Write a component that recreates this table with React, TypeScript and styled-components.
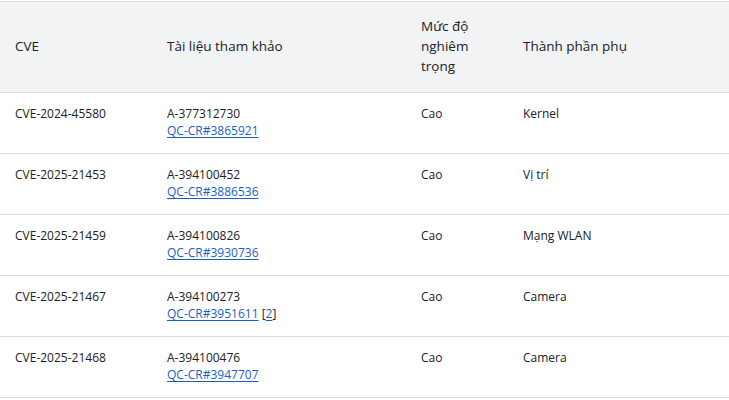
import styled, { createGlobalStyle } from 'styled-components';

const GlobalStyle = createGlobalStyle`
  html, body {
    margin: 0;
    padding: 0;
    background: #ffffff;
  }
  body {
    padding-top: 1px;
    font-family: 'Open Sans', 'Noto Sans', 'Liberation Sans', sans-serif;
    color: #202124;
  }
`;

const Table = styled.table`
  width: 729px;
  border-collapse: collapse;
  table-layout: fixed;
  border-top: 1px solid #dadce0;
`;

const Col = styled.col<{ $width: number }>`
  width: ${p => p.$width}px;
`;

const HeadCell = styled.th`
  background: #f1f3f4;
  text-align: left;
  font-weight: 400;
  font-size: 13.5px;
  line-height: 20px;
  padding: 14px 15px 16px;
  vertical-align: middle;
  border-bottom: 1px solid #dadce0;
`;

const Row = styled.tr`
  border-bottom: 1px solid #dadce0;
`;

const Cell = styled.td`
  font-size: 12px;
  line-height: 17px;
  padding: 12px 15px 14px;
  vertical-align: top;
`;

const Line = styled.div``;

const RefLink = styled.a`
  color: #1a5fc8;
  text-decoration: underline;
  text-underline-offset: 2px;
`;

type Bug = {
  cve: string;
  id: string;
  ref: string;
  extra?: string;
  severity: string;
  component: string;
};

const rows: Bug[] = [
  { cve: 'CVE-2024-45580', id: 'A-377312730', ref: 'QC-CR#3865921', severity: 'Cao', component: 'Kernel' },
  { cve: 'CVE-2025-21453', id: 'A-394100452', ref: 'QC-CR#3886536', severity: 'Cao', component: 'Vị trí' },
  { cve: 'CVE-2025-21459', id: 'A-394100826', ref: 'QC-CR#3930736', severity: 'Cao', component: 'Mạng WLAN' },
  { cve: 'CVE-2025-21467', id: 'A-394100273', ref: 'QC-CR#3951611', extra: '2', severity: 'Cao', component: 'Camera' },
  { cve: 'CVE-2025-21468', id: 'A-394100476', ref: 'QC-CR#3947707', severity: 'Cao', component: 'Camera' },
];

const App = (): JSX.Element => (
  <>
    <GlobalStyle />
    <Table>
      <colgroup>
        <Col $width={152} />
        <Col $width={254} />
        <Col $width={102} />
        <Col $width={221} />
      </colgroup>
      <thead>
        <tr>
          <HeadCell>CVE</HeadCell>
          <HeadCell>Tài liệu tham khảo</HeadCell>
          <HeadCell>Mức độ nghiêm trọng</HeadCell>
          <HeadCell>Thành phần phụ</HeadCell>
        </tr>
      </thead>
      <tbody>
        {rows.map(r => (
          <Row key={r.cve}>
            <Cell>{r.cve}</Cell>
            <Cell>
              <Line>{r.id}</Line>
              <Line>
                <RefLink href="#">{r.ref}</RefLink>
                {r.extra && (
                  <>
                    {' '}[<RefLink href="#">{r.extra}</RefLink>]
                  </>
                )}
              </Line>
            </Cell>
            <Cell>{r.severity}</Cell>
            <Cell>{r.component}</Cell>
          </Row>
        ))}
      </tbody>
    </Table>
  </>
);

export default App;
